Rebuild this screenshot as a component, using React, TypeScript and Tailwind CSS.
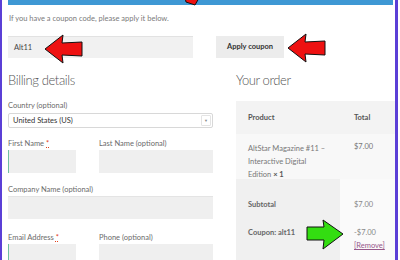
import React from 'react';

function LeftArrow({ className }: { className: string }) {
  return (
    <svg className={className} viewBox="0 0 40 30" width="40" height="30">
      <polygon
        points="1,15 19,1 18,9 38,8 38,22 18,21 19,29"
        fill="#ee1111"
        stroke="#111"
        strokeWidth="1"
        strokeLinejoin="miter"
      />
    </svg>
  );
}

function RightArrow({ className }: { className: string }) {
  return (
    <svg className={className} viewBox="0 0 38 32" width="38" height="32">
      <polygon
        points="37,15 17,1 18,8 1,8 1,21 18,21 17,30"
        fill="#33dd11"
        stroke="#111"
        strokeWidth="1"
      />
    </svg>
  );
}

function Label({ text, required }: { text: string; required?: boolean }) {
  return (
    <div className="text-[7.5px] leading-[10px] text-[#6b6b6b]">
      {text}
      {required && <span className="text-[#e2401c] ml-[2px] underline decoration-dotted">*</span>}
    </div>
  );
}

export default function App() {
  return (
    <div
      className="relative w-[400px] h-[260px] overflow-hidden bg-white"
      style={{ fontFamily: 'Lato, "Open Sans", sans-serif' }}
    >
      <div className="w-[398px] h-[260px] border-l-[2px] border-r-[3px] border-[#5b3fd6] pl-[6px]">
        <div className="h-[5px] bg-[#3e98d4] mr-[2px]" />
        <div className="mt-[9px] text-[7.5px] leading-[10px] text-[#7a7a7a] pl-[1px]">
          If you have a coupon code, please apply it below.
        </div>
        <div className="mt-[12px] flex items-stretch h-[22px]">
          <div className="w-[185px] bg-[#f1f1f1] border-t border-[#e2e2e2] flex items-center pl-[6px] text-[7.5px] text-[#444]">
            Alt11
          </div>
          <div className="ml-[23px] w-[68px] bg-[#ececec] flex items-center justify-center text-[7.5px] font-bold text-[#333]">
            Apply coupon
          </div>
        </div>
        <div className="flex mt-[13px] h-[200px]">
          <div className="w-[205px]">
            <div className="text-[13px] leading-[18px] font-light tracking-[-0.4px] text-[#555]">Billing details</div>
            <div className="mt-[12px]"><Label text="Country (optional)" /></div>
            <div className="mt-[2px] h-[15px] border border-[#d8d8d8] rounded-[2px] flex items-center justify-between pl-[4px] pr-[1px] text-[7.5px] text-[#333]">
              <span>United States (US)</span>
              <span className="w-[10px] h-[11px] border border-[#e4e4e4] rounded-[1px] flex items-center justify-center text-[4px] text-[#888]">▼</span>
            </div>
            <div className="mt-[11px] flex">
              <div className="w-[68px]">
                <Label text="First Name" required />
                <div className="mt-[1px] h-[23px] bg-[#efefef] border-l border-[#6fc2a0]" />
              </div>
              <div className="ml-[23px] flex-1">
                <Label text="Last Name (optional)" />
                <div className="mt-[1px] h-[23px] bg-[#efefef]" />
              </div>
            </div>
            <div className="mt-[12px]"><Label text="Company Name (optional)" /></div>
            <div className="mt-[1px] h-[23px] bg-[#efefef] border-t border-[#e4e4e4]" />
            <div className="mt-[14px] flex">
              <div className="w-[68px]">
                <Label text="Email Address" required />
                <div className="mt-[1px] h-[23px] bg-[#efefef] border-l border-[#6fc2a0]" />
              </div>
              <div className="ml-[23px] flex-1">
                <Label text="Phone (optional)" />
                <div className="mt-[1px] h-[23px] bg-[#efefef]" />
              </div>
            </div>
          </div>
          <div className="ml-[23px] flex-1 flex flex-col">
            <div className="shrink-0 text-[13px] leading-[18px] font-light tracking-[-0.4px] text-[#555]">Your order</div>
            <div className="mt-[12px] flex-1 flex flex-col text-[7.5px] leading-[13px]">
              <div className="shrink-0 h-[33px] bg-[#f3f3f3] flex items-center font-bold text-[#555]">
                <div className="w-[104px] pl-[12px]">Product</div>
                <div className="pl-[14px]">Total</div>
              </div>
              <div className="shrink-0 h-[45px] bg-[#f8f8f8] flex text-[#777] pt-[8px]">
                <div className="w-[104px] pl-[12px]">
                  AltStar Magazine #11 –<br />Interactive Digital<br />Edition <b className="text-[#555]">× 1</b>
                </div>
                <div className="pl-[14px] -mt-[2px]">$7.00</div>
              </div>
              <div className="flex-1 flex">
                <div className="w-[104px] bg-[#f0f0f0] pl-[12px] pt-[19px] font-bold text-[#666]">
                  <div>Subtotal</div>
                  <div className="mt-[15px]">Coupon: alt11</div>
                </div>
                <div className="flex-1 bg-[#fafafa] pl-[14px] pt-[19px] text-[#888]">
                  <div>$7.00</div>
                  <div className="mt-[15px]">-$7.00</div>
                  <div className="text-[#96588a] underline">[Remove]</div>
                </div>
              </div>
            </div>
          </div>
        </div>
      </div>
      <LeftArrow className="absolute left-[44px] top-[34px]" />
      <LeftArrow className="absolute left-[287px] top-[33px]" />
      <RightArrow className="absolute left-[306px] top-[219px]" />
      <svg className="absolute left-[183px] top-[-8px]" width="18" height="14" viewBox="0 0 18 14">
        <polygon points="1,1 16,6 12,13 3,10" fill="#ee1111" stroke="#111" strokeWidth="1" />
      </svg>
    </div>
  );
}
